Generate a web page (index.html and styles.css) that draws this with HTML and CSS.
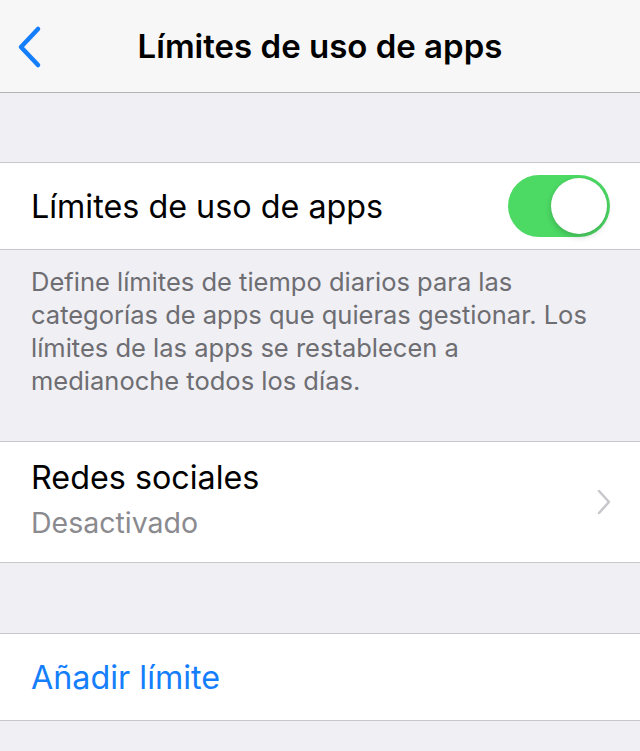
FILE: index.html
```html
<!DOCTYPE html>
<html lang="es">
<head>
  <meta charset="UTF-8">
  <meta name="viewport" content="width=device-width, initial-scale=1.0">
  <title>Límites de uso de apps</title>
  <link rel="stylesheet" href="styles.css">
</head>
<body>
  <!-- Navigation Bar -->
  <header class="nav-bar">
    <a class="back-btn" href="#">
      <svg width="28" height="44" viewBox="0 0 28 44">
        <path d="M22 4 L5 22 L22 40" fill="none" stroke="#157efb" stroke-width="4.5" stroke-linecap="round" stroke-linejoin="round"/>
      </svg>
    </a>
    <h1 class="nav-title">Límites de uso de apps</h1>
  </header>

  <!-- Toggle Section -->
  <section class="group group-first">
    <div class="cell">
      <span class="cell-label">Límites de uso de apps</span>
      <div class="switch is-on"><div class="switch-knob"></div></div>
    </div>
  </section>
  <p class="group-footer">Define límites de tiempo diarios para las categorías de apps que quieras gestionar. Los límites de las apps se restablecen a medianoche todos los días.</p>

  <!-- Limits List -->
  <section class="group">
    <div class="cell cell-tall">
      <div class="cell-text">
        <span class="cell-label">Redes sociales</span>
        <span class="cell-detail">Desactivado</span>
      </div>
      <svg class="chevron" width="16" height="28" viewBox="0 0 16 28">
        <path d="M3 3 L13 14 L3 25" fill="none" stroke="#c7c7cc" stroke-width="2.5" stroke-linecap="round" stroke-linejoin="round"/>
      </svg>
    </div>
  </section>

  <section class="group group-spaced">
    <div class="cell">
      <span class="cell-label cell-link">Añadir límite</span>
    </div>
  </section>
</body>
</html>
```

FILE: styles.css
```css
/* Reset */
* {
  margin: 0;
  padding: 0;
  box-sizing: border-box;
}

body {
  font-family: Inter, "Liberation Sans", Arial, sans-serif;
  background: #efeff4;
  color: #000;
  min-height: 100vh;
}

/* Navigation Bar */
.nav-bar {
  position: relative;
  height: 93px;
  background: #f7f7f8;
  border-bottom: 1px solid #b2b2b2;
  display: flex;
  align-items: center;
  justify-content: center;
}

.back-btn {
  position: absolute;
  left: 16px;
  top: 25px;
  display: block;
  line-height: 0;
}

.nav-title {
  font-size: 33px;
  font-weight: 600;
}

/* Grouped Sections */
.group {
  background: #fff;
  border-top: 1px solid #c8c7cc;
  border-bottom: 1px solid #c8c7cc;
}

.group-first {
  margin-top: 69px;
}

.group-spaced {
  margin-top: 70px;
}

.group-footer {
  padding: 15px 40px 44px 31px;
  font-size: 25.5px;
  line-height: 33px;
  color: #6d6d72;
}

.cell {
  height: 86px;
  display: flex;
  align-items: center;
  justify-content: space-between;
  padding: 0 30px 0 31px;
}

.cell-tall {
  height: 120px;
}

.cell-text {
  display: flex;
  flex-direction: column;
  gap: 8px;
  padding-bottom: 6px;
}

.cell-label {
  font-size: 32.3px;
}

.cell-detail {
  font-size: 28.5px;
  color: #8a8a8f;
}

.cell-link {
  color: #157efb;
}

.chevron {
  margin-right: -2px;
}

/* Toggle Switch */
.switch {
  position: relative;
  width: 102px;
  height: 62px;
  border-radius: 31px;
  background: #e5e5ea;
}

.switch.is-on {
  background: #4cd964;
}

.switch-knob {
  position: absolute;
  top: 3px;
  right: 3px;
  width: 56px;
  height: 56px;
  border-radius: 50%;
  background: #fff;
  box-shadow: 0 3px 6px rgba(0, 0, 0, 0.18), 0 0 1px rgba(0, 0, 0, 0.1);
}
```
